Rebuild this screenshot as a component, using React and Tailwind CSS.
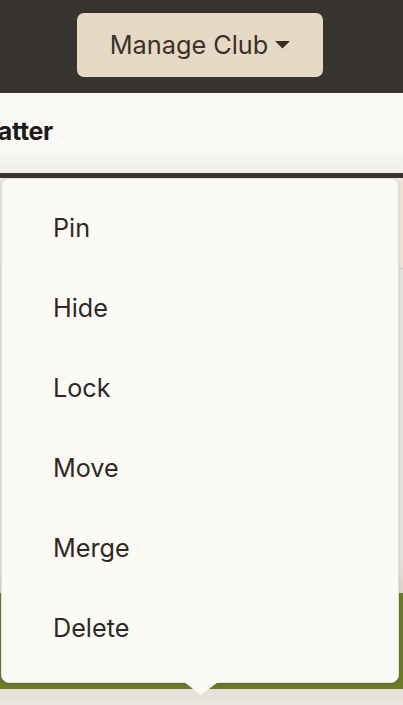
import React from "react";

const actions = ["Pin", "Hide", "Lock", "Move", "Merge", "Delete"];

function Caret() {
  return (
    <svg width="15" height="8" viewBox="0 0 15 8" className="mt-[1px]">
      <path d="M0 0 H15 L7.5 7.5 Z" fill="#3a2b20" />
    </svg>
  );
}

export default function App() {
  return (
    <div className="relative flex h-[705px] w-[403px] flex-col overflow-hidden bg-[#e7e5e0] font-['Inter',sans-serif]">
      {/* top bar */}
      <header className="flex h-[93px] shrink-0 bg-[#373430] pl-[77px] pt-[13px]">
        <button className="flex h-[64px] w-[246px] items-center justify-center gap-[7px] rounded-[7px] bg-[#e5d9c6] pb-[1px] text-[25.3px] text-[#3b3129]">
          Manage Club
          <Caret />
        </button>
      </header>

      {/* club title panel, scrolled so only the end of the name shows */}
      <div className="flex h-[80px] shrink-0 items-center bg-gradient-to-b from-[#faf8f4] from-70% to-[#efede8]">
        <div className="flex w-[53px] shrink-0 justify-end whitespace-nowrap pb-[2px] text-[25px] font-bold tracking-[-0.3px] text-[#1f1b17]">
          Club Chatter
        </div>
      </div>
      <div className="h-[5px] shrink-0 bg-[#373430]" />

      {/* content behind the menu */}
      <div className="flex flex-1 flex-col">
        <div className="h-[90px] bg-[#eee6db]" />
        <div className="h-[1px] bg-[#cfccc6]" />
        <div className="h-[291px] bg-[#e7e5e0]" />
        <div className="h-[33px] bg-gradient-to-b from-[#e7e5e0] to-[#ded6cb]" />
        <div className="h-[96px] bg-[#6b7a2b]" />
        <div className="flex-1 bg-gradient-to-b from-[#e5ded6] to-[#ebe6df]" />
      </div>

      {/* dropdown menu */}
      <div className="absolute left-[1px] top-[178px] h-[505px] w-[398px] rounded-[8px] border border-[#e2dfd8] bg-[#fbfaf5] pt-[10px] shadow-[0_1px_4px_rgba(0,0,0,0.12)]">
        {actions.map((a) => (
          <div
            key={a}
            className="flex h-[80px] items-center pl-[51px] text-[25.2px] text-[#2e2924]"
          >
            {a}
          </div>
        ))}
        <svg
          width="34"
          height="13"
          viewBox="0 0 34 13"
          className="absolute bottom-[-13px] left-[182px]"
        >
          <path d="M0 0 H34 L17 13 Z" fill="#fbfaf5" />
        </svg>
      </div>
    </div>
  );
}
